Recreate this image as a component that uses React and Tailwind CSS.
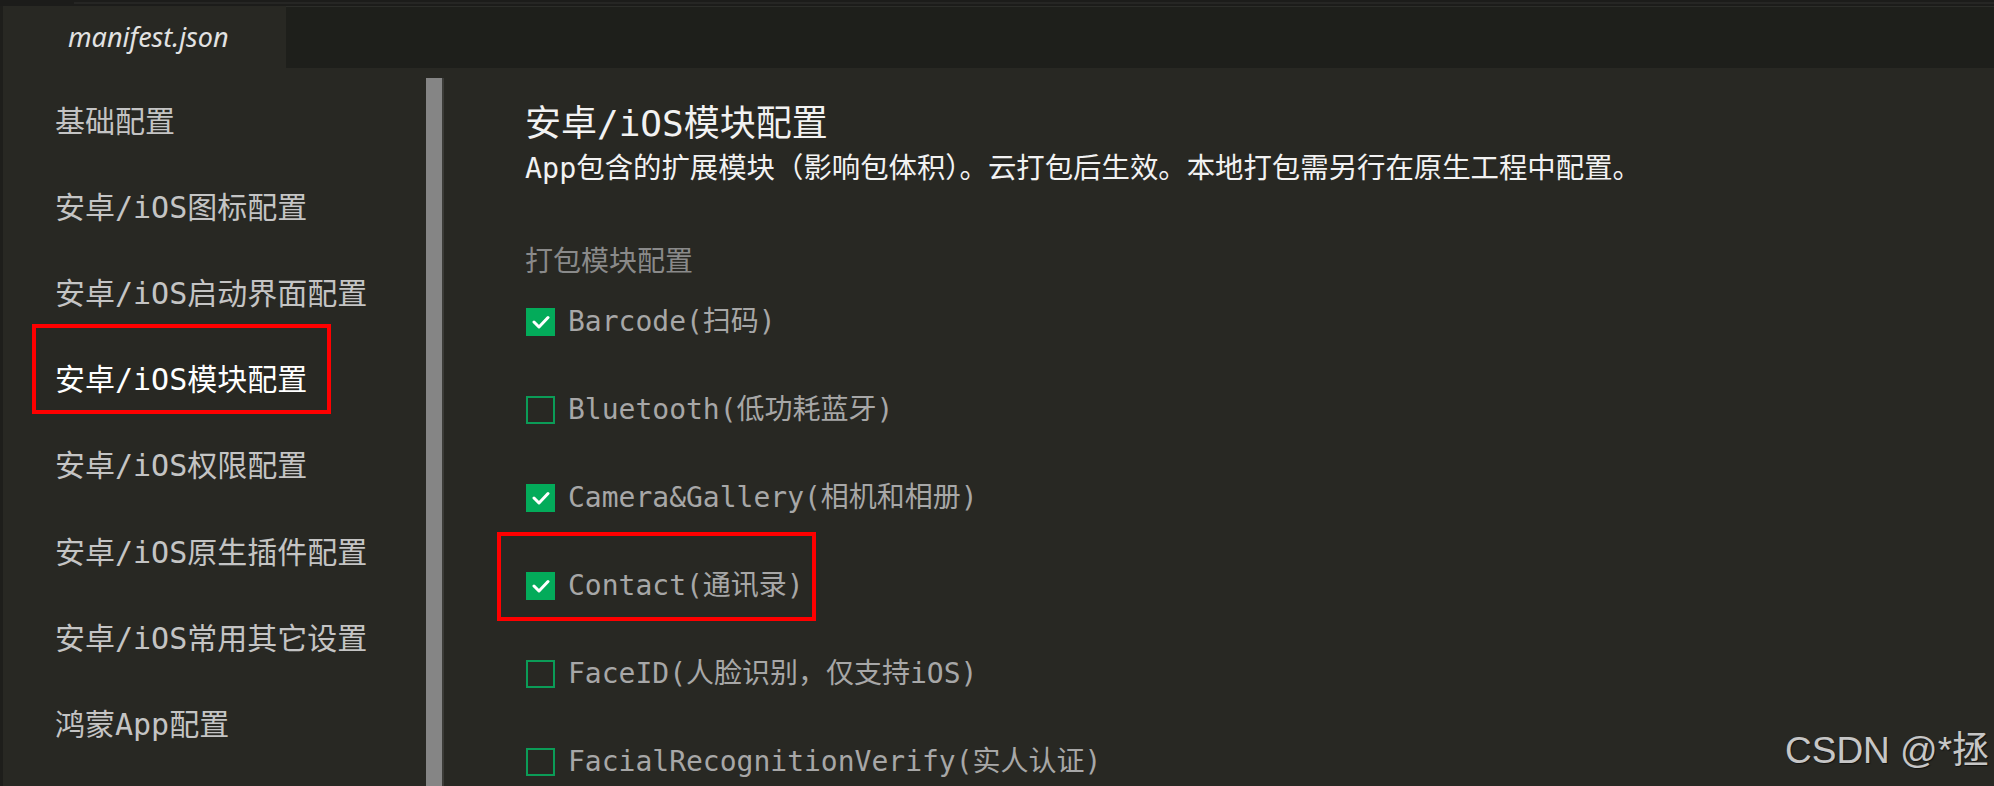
import React from 'react';

const menu = [
  '基础配置',
  '安卓/iOS图标配置',
  '安卓/iOS启动界面配置',
  '安卓/iOS模块配置',
  '安卓/iOS权限配置',
  '安卓/iOS原生插件配置',
  '安卓/iOS常用其它设置',
  '鸿蒙App配置',
];

const modules = [
  { label: 'Barcode(扫码)', checked: true },
  { label: 'Bluetooth(低功耗蓝牙)', checked: false },
  { label: 'Camera&Gallery(相机和相册)', checked: true },
  { label: 'Contact(通讯录)', checked: true },
  { label: 'FaceID(人脸识别，仅支持iOS)', checked: false },
  { label: 'FacialRecognitionVerify(实人认证)', checked: false },
];

function Checkbox({ checked }) {
  if (!checked) {
    return <div className="w-[29px] h-[28px] border-2 border-[#0b9c57] shrink-0" />;
  }
  return (
    <div className="w-[29px] h-[28px] bg-[#03ab5a] flex items-center justify-center shrink-0">
      <svg width="18" height="14" viewBox="0 0 18 14" fill="none">
        <path d="M2 7 L7 12 L16 2.5" stroke="#ffffff" strokeWidth="3" strokeLinecap="round" strokeLinejoin="round" />
      </svg>
    </div>
  );
}

export default function App() {
  const selected = 3;

  return (
    <div className="relative w-[1994px] h-[786px] overflow-hidden bg-[#282823] flex flex-col font-['DejaVu_Sans_Mono','Noto_Sans_CJK_SC',monospace]">
      {/* window top strip */}
      <div className="h-[6px] bg-[#1c1c1a] flex shrink-0">
        <div className="w-[74px]" />
        <div className="flex-1 mt-[2px] h-[2px] bg-[#262624]" />
      </div>

      {/* tab bar */}
      <div className="h-[62px] flex shrink-0">
        <div className="w-[3px] bg-[#1e1e1b]" />
        <div className="w-[283px] bg-[#282823] flex items-center pl-[65px]">
          <span className="italic text-[27px] text-[#e2e2e2] font-['Noto_Sans',sans-serif]">manifest.json</span>
        </div>
        <div className="flex-1 bg-[#1e1f1b] border-t border-[#2c2d29]" />
      </div>

      {/* body */}
      <div className="flex-1 flex min-h-0">
        <div className="w-[3px] bg-[#1e1e1b]" />

        {/* sidebar */}
        <div className="w-[423px] pt-[10px] pl-[52px] flex flex-col">
          {menu.map((item, i) => (
            <div
              key={item}
              className={`h-[86.2px] flex items-center text-[30px] whitespace-nowrap ${
                i === selected ? 'text-white' : 'text-[#c4c4c4]'
              }`}
            >
              {item}
            </div>
          ))}
        </div>

        {/* scrollbar */}
        <div className="w-[18px] pt-[10px] flex">
          <div className="w-[16px] bg-[#858585]" />
          <div className="w-[2px] bg-[#3c3c38]" />
        </div>

        {/* content */}
        <div className="flex-1 pl-[81px] pt-[34px] flex flex-col">
          <div className="text-[36px] leading-[44px] text-[#f2f2f2] whitespace-nowrap">安卓/iOS模块配置</div>
          <div className="mt-[3px] text-[28.4px] leading-[40px] text-[#f2f2f2] whitespace-nowrap">
            App包含的扩展模块（影响包体积）。云打包后生效。本地打包需另行在原生工程中配置。
          </div>
          <div className="mt-[56px] text-[28px] leading-[33px] text-[#8a8a8a] whitespace-nowrap">打包模块配置</div>
          <div className="flex flex-col">
            {modules.map((m) => (
              <div key={m.label} className="h-[88px] flex items-center pl-px gap-[13px]">
                <Checkbox checked={m.checked} />
                <span className="text-[28px] text-[#a7a7a7] whitespace-nowrap">{m.label}</span>
              </div>
            ))}
          </div>
        </div>
      </div>

      {/* annotation boxes */}
      <div className="absolute left-[32px] top-[324px] w-[299px] h-[90px] border-4 border-[#ff0000]" />
      <div className="absolute left-[497px] top-[532px] w-[319px] h-[89px] border-4 border-[#ff0000]" />

      {/* watermark */}
      <div className="absolute left-[1785px] top-[732px] whitespace-nowrap leading-none text-[37px] text-[#c6c6c6] font-['Liberation_Sans','Noto_Sans_CJK_SC',sans-serif] [text-shadow:1px_1px_1px_rgba(0,0,0,0.5)]">
        CSDN @*拯
      </div>
    </div>
  );
}
